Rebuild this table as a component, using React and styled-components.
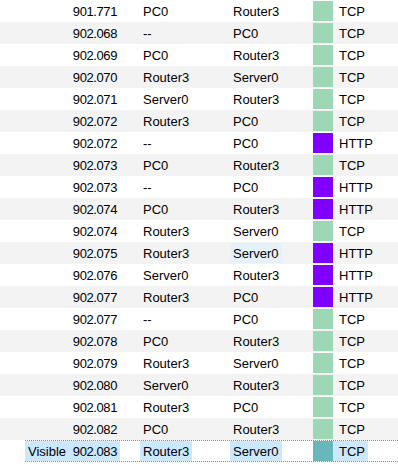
import React from 'react';
import styled, { createGlobalStyle } from 'styled-components';

const GlobalStyle = createGlobalStyle`
  html, body {
    margin: 0;
    padding: 0;
    background: #ffffff;
  }
  body {
    font-family: "Liberation Sans", Arial, sans-serif;
    font-size: 13px;
    color: #000000;
  }
`;

const TYPE_COLORS = {
  TCP: '#9dd7b3',
  HTTP: '#7f00ff',
};

const events = [
  { time: '901.771', last: 'PC0', at: 'Router3', type: 'TCP' },
  { time: '902.068', last: '--', at: 'PC0', type: 'TCP' },
  { time: '902.069', last: 'PC0', at: 'Router3', type: 'TCP' },
  { time: '902.070', last: 'Router3', at: 'Server0', type: 'TCP' },
  { time: '902.071', last: 'Server0', at: 'Router3', type: 'TCP' },
  { time: '902.072', last: 'Router3', at: 'PC0', type: 'TCP' },
  { time: '902.072', last: '--', at: 'PC0', type: 'HTTP' },
  { time: '902.073', last: 'PC0', at: 'Router3', type: 'TCP' },
  { time: '902.073', last: '--', at: 'PC0', type: 'HTTP' },
  { time: '902.074', last: 'PC0', at: 'Router3', type: 'HTTP' },
  { time: '902.074', last: 'Router3', at: 'Server0', type: 'TCP' },
  { time: '902.075', last: 'Router3', at: 'Server0', type: 'HTTP', hover: true },
  { time: '902.076', last: 'Server0', at: 'Router3', type: 'HTTP' },
  { time: '902.077', last: 'Router3', at: 'PC0', type: 'HTTP' },
  { time: '902.077', last: '--', at: 'PC0', type: 'TCP' },
  { time: '902.078', last: 'PC0', at: 'Router3', type: 'TCP' },
  { time: '902.079', last: 'Router3', at: 'Server0', type: 'TCP' },
  { time: '902.080', last: 'Server0', at: 'Router3', type: 'TCP' },
  { time: '902.081', last: 'Router3', at: 'PC0', type: 'TCP' },
  { time: '902.082', last: 'PC0', at: 'Router3', type: 'TCP' },
  { time: '902.083', last: 'Router3', at: 'Server0', type: 'TCP', selected: true, visible: true },
];

const EventList = styled.div`
  display: flex;
  flex-direction: column;
  width: 398px;
`;

const Row = styled.div`
  display: flex;
  height: 22px;
  box-sizing: border-box;
  background: ${(p) => (p.$odd ? '#f3f3f3' : '#ffffff')};
  border-top: 1px dotted ${(p) => (p.$selected ? '#9c8672' : 'transparent')};
  border-bottom: 1px dotted ${(p) => (p.$selected ? '#9c8672' : 'transparent')};
  margin-left: ${(p) => (p.$selected ? '25px' : '0')};
  padding-left: ${(p) => (p.$selected ? '0' : '25px')};
`;

const Cell = styled.div`
  flex: 0 0 ${(p) => p.$width}px;
  display: flex;
  align-items: flex-start;
`;

const Label = styled.span`
  display: inline-flex;
  justify-content: ${(p) => (p.$spread ? 'space-between' : 'flex-start')};
  width: ${(p) => (p.$spread ? '100%' : 'auto')};
  box-sizing: border-box;
  height: 20px;
  line-height: 22px;
  padding: 0 ${(p) => p.$padRight ?? 3}px 0 ${(p) => p.$padLeft ?? 3}px;
  white-space: nowrap;
  background: ${(p) =>
    p.$selected ? '#cce8ff' : p.$hover ? '#e5f1fb' : 'transparent'};
`;

const Time = styled.span`
  letter-spacing: -0.4px;
`;

const Swatch = styled.span`
  display: block;
  width: 20px;
  height: 20px;
  background: ${(p) => (p.$selected ? '#68b7bb' : p.$color)};
`;

function EventRow({ ev, index }) {
  const sel = !!ev.selected;
  return (
    <Row $odd={index % 2 === 1} $selected={sel}>
      <Cell $width={95}>
        <Label $spread $selected={sel}>
          <span>{ev.visible ? 'Visible' : ''}</span>
          <Time>{ev.time}</Time>
        </Label>
      </Cell>
      <Cell $width={20} />
      <Cell $width={90}>
        <Label $selected={sel}>{ev.last}</Label>
      </Cell>
      <Cell $width={83}>
        <Label $selected={sel} $hover={ev.hover}>{ev.at}</Label>
      </Cell>
      <Cell $width={20}>
        <Swatch $color={TYPE_COLORS[ev.type]} $selected={sel} />
      </Cell>
      <Cell $width={60}>
        <Label $selected={sel} $padLeft={6}>{ev.type}</Label>
      </Cell>
    </Row>
  );
}

export default function App() {
  return (
    <>
      <GlobalStyle />
      <EventList>
        {events.map((ev, i) => (
          <EventRow key={i} ev={ev} index={i} />
        ))}
      </EventList>
    </>
  );
}
